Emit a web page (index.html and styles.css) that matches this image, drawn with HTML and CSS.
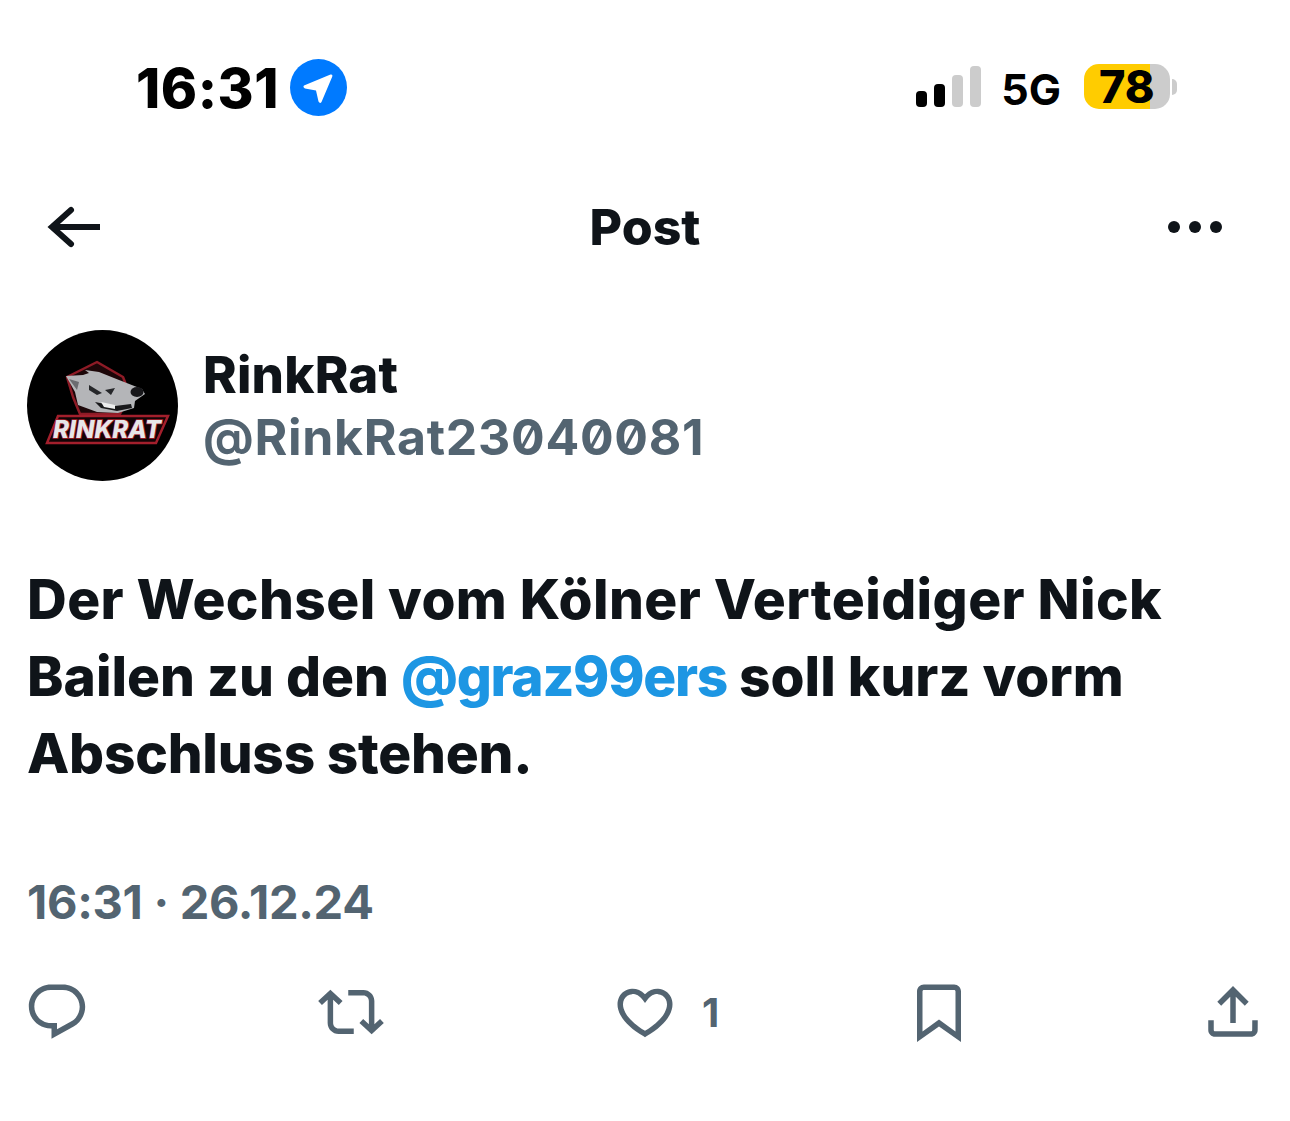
FILE: index.html
```html
<!DOCTYPE html>
<html lang="de">
<head>
  <meta charset="UTF-8">
  <title>Post</title>
  <meta name="viewport" content="width=device-width, initial-scale=1.0">
  <link rel="stylesheet" href="styles.css">
</head>
<body>
  <div id="status-bar">
    <div class="status-left">
      <span class="clock">16:31</span>
      <svg class="location" viewBox="0 0 57 57">
        <circle cx="28.5" cy="28.5" r="28.5" fill="#007aff"/>
        <path d="M14 26.5 L40.5 15.5 Q43 15 42.3 17.5 L31.5 43 Q30 45 28.5 42.5 L26 31.5 L15 29.5 Q12.5 28 14 26.5 Z" fill="#fff"/>
      </svg>
    </div>
    <div class="status-right">
      <div class="signal">
        <span class="bar on b1"></span>
        <span class="bar on b2"></span>
        <span class="bar b3"></span>
        <span class="bar b4"></span>
      </div>
      <span class="network">5G</span>
      <div class="battery">
        <div class="battery-body"><span class="battery-level">78</span></div>
        <span class="battery-nub"></span>
      </div>
    </div>
  </div>

  <div id="nav-bar">
    <svg class="back" viewBox="0 0 60 48">
      <path d="M29 7 L10 24 L29 41" fill="none" stroke="#0f1419" stroke-width="6" stroke-linecap="round"/>
      <path d="M10 24 H58" fill="none" stroke="#0f1419" stroke-width="6"/>
    </svg>
    <h1 class="nav-title">Post</h1>
    <div class="more">
      <span class="dot"></span>
      <span class="dot"></span>
      <span class="dot"></span>
    </div>
  </div>

  <div id="post">
    <div class="author">
      <svg class="avatar" viewBox="0 0 151 151">
        <circle cx="75.5" cy="75.5" r="75.5" fill="#000"/>
        <path d="M70 32 L96 47 L103 65 L93 84 L53 84 L46 67 L40 47 Z" fill="#1c0608" stroke="#8e1b26" stroke-width="2.5" stroke-linejoin="round"/>
        <path d="M39 46 L56 45 L62 43 L58 40 L72 42 L92 50 L115 59 L118 64 L108 71 L107 78 L91 83 L70 82 L51 75 L48 62 Z" fill="#b4b5b8"/>
        <path d="M42 49 L52 52 L50 60 Z" fill="#6b6c70"/>
        <path d="M62 55 L75 63 L70 65 L62 60 Z M78 60 L88 58 L84 65 Z" fill="#26272a"/>
        <path d="M68 72 L88 76 L104 74 L105 78 L90 81 L74 78 Z" fill="#18181a"/>
        <path d="M74 72 L88 75 L88 79 L77 77 Z" fill="#eceded"/>
        <ellipse cx="110" cy="62" rx="6.5" ry="5" fill="#17171a"/>
        <path d="M31 86 L141 86 L129 113 L20 113 Z" fill="#120406" stroke="#a31f2c" stroke-width="2.5"/>
        <text class="logo-text" x="26" y="108" textLength="108" lengthAdjust="spacingAndGlyphs">RINKRAT</text>
      </svg>
      <div class="author-names">
        <span class="display-name">RinkRat</span>
        <span class="handle">@RinkRat23040081</span>
      </div>
    </div>

    <p class="post-text"><span class="line-wide">Der Wechsel vom Kölner Verteidiger Nick</span> Bailen zu den <span class="mention">@graz99ers</span> soll kurz vorm <span class="line-tight">Abschluss stehen.</span></p>

    <div class="post-date">16:31 · 26.12.24</div>

    <div class="actions">
      <div class="action">
        <svg class="icon" viewBox="0 0 24 24"><path d="M1.751 10c0-4.42 3.584-8 8.005-8h4.366c4.49 0 8.129 3.64 8.129 8.13 0 2.96-1.607 5.68-4.196 7.11l-8.054 4.46v-3.69h-.067c-4.49.1-8.183-3.51-8.183-8.01zm8.005-6c-3.317 0-6.005 2.69-6.005 6 0 3.37 2.77 6.08 6.138 6.01l.351-.01h1.761v2.3l5.087-2.81c1.951-1.08 3.163-3.13 3.163-5.36 0-3.39-2.744-6.13-6.129-6.13H9.756z"/></svg>
      </div>
      <div class="action">
        <svg class="icon" viewBox="0 0 24 24"><path d="M4.5 3.88l4.432 4.14-1.364 1.46L5.5 7.55V16c0 1.1.896 2 2 2H13v2H7.5c-2.209 0-4-1.79-4-4V7.55L1.432 9.48.068 8.02 4.5 3.88zM16.5 6H11V4h5.5c2.209 0 4 1.79 4 4v8.45l2.068-1.93 1.364 1.46-4.432 4.14-4.432-4.14 1.364-1.46 2.068 1.93V8c0-1.1-.896-2-2-2z"/></svg>
      </div>
      <div class="action">
        <svg class="icon" viewBox="0 0 24 24"><path d="M16.697 5.5c-1.222-.06-2.679.51-3.89 2.16l-.805 1.09-.806-1.09C9.984 6.01 8.526 5.44 7.304 5.5c-1.243.07-2.349.78-2.91 1.91-.552 1.12-.633 2.78.479 4.82 1.074 1.97 3.257 4.27 7.129 6.61 3.87-2.34 6.052-4.64 7.126-6.61 1.111-2.04 1.03-3.7.477-4.82-.561-1.13-1.666-1.84-2.908-1.91zm4.187 7.69c-1.351 2.48-4.001 5.12-8.379 7.67l-.503.3-.504-.3c-4.379-2.55-7.029-5.19-8.382-7.67-1.36-2.5-1.41-4.86-.514-6.67.887-1.79 2.647-2.91 4.601-3.01 1.651-.09 3.368.56 4.798 2.01 1.429-1.45 3.146-2.1 4.796-2.01 1.954.1 3.714 1.22 4.601 3.01.896 1.81.846 4.17-.514 6.67z"/></svg>
        <span class="count">1</span>
      </div>
      <div class="action">
        <svg class="icon" viewBox="0 0 24 24"><path d="M4 4.5C4 3.12 5.119 2 6.5 2h11C18.881 2 20 3.12 20 4.5v18.44l-8-5.71-8 5.71V4.5zM6.5 4c-.276 0-.5.22-.5.5v14.56l6-4.29 6 4.29V4.5c0-.28-.224-.5-.5-.5h-11z"/></svg>
      </div>
      <div class="action">
        <svg class="icon" viewBox="0 0 24 24"><path d="M12 2.59l5.7 5.7-1.41 1.42L13 6.41V16h-2V6.41l-3.3 3.3-1.41-1.42L12 2.59zM21 15l-.02 3.51c0 1.38-1.12 2.49-2.5 2.49H5.5C4.11 21 3 19.88 3 18.5V15h2v3.5c0 .28.22.5.5.5h12.98c.28 0 .5-.22.5-.5L19 15h2z"/></svg>
      </div>
    </div>
  </div>
</body>
</html>
```

FILE: styles.css
```css
html, body {
  margin: 0;
  padding: 0;
  background: #fff;
  font-family: 'Inter', 'Liberation Sans', sans-serif;
  color: #0f1419;
  overflow: hidden;
}

/* status bar */
#status-bar {
  height: 175px;
  display: flex;
  align-items: center;
  justify-content: space-between;
  padding: 0 113px 0 136px;
}
.status-left {
  display: flex;
  align-items: center;
  gap: 11px;
}
.clock {
  font-size: 55px;
  font-weight: 800;
  letter-spacing: 0.5px;
  color: #000;
  line-height: 1;
  padding-top: 2px;
}
.location {
  width: 57px;
  height: 57px;
}
.status-right {
  display: flex;
  align-items: center;
}
.signal {
  display: flex;
  align-items: flex-end;
  gap: 7px;
  height: 41px;
  margin-bottom: 2px;
}
.bar {
  width: 11px;
  border-radius: 4px;
  background: #ccc;
}
.bar.on { background: #000; }
.b1 { height: 16px; }
.b2 { height: 23px; }
.b3 { height: 32px; }
.b4 { height: 41px; }
.network {
  margin-left: 20px;
  font-size: 43px;
  font-weight: 700;
  color: #000;
  line-height: 1;
  padding-top: 3px;
}
.battery {
  display: flex;
  align-items: center;
  margin-left: 23px;
  margin-bottom: 2px;
  gap: 2px;
}
.battery-body {
  width: 86px;
  height: 45px;
  border-radius: 15px;
  background: linear-gradient(to right, #ffcc00 66px, #ccc 66px);
  display: flex;
  align-items: center;
  padding-left: 15px;
  box-sizing: border-box;
}
.battery-level {
  font-size: 45px;
  font-weight: 800;
  color: #000;
  line-height: 1;
}
.battery-nub {
  width: 5px;
  height: 16px;
  background: #ccc;
  border-radius: 0 8px 8px 0;
}

/* nav */
#nav-bar {
  height: 103px;
  display: grid;
  grid-template-columns: 1fr auto 1fr;
  align-items: center;
  padding: 0 68px;
}
.back {
  width: 60px;
  height: 48px;
  margin-left: -26px;
}
.nav-title {
  margin: 0;
  font-size: 50px;
  font-weight: 800;
  line-height: 1;
}
.more {
  justify-self: end;
  display: flex;
  gap: 9px;
}
.dot {
  width: 12px;
  height: 12px;
  border-radius: 50%;
  background: #0f1419;
}

/* post */
#post {
  padding-top: 52px;
}
.author {
  display: flex;
  align-items: center;
  gap: 25px;
  padding-left: 27px;
}
.avatar {
  width: 151px;
  height: 151px;
  flex: none;
}
.logo-text {
  font-family: 'Inter', sans-serif;
  font-size: 24px;
  font-weight: 800;
  font-style: italic;
  fill: #e6e6e8;
  stroke: #a31f2c;
  stroke-width: 1.6;
  paint-order: stroke;
}
.author-names {
  display: flex;
  flex-direction: column;
}
.display-name {
  font-size: 51px;
  font-weight: 800;
  letter-spacing: 0.2px;
  line-height: 63px;
}
.handle {
  font-size: 50px;
  font-weight: 700;
  font-feature-settings: "zero";
  letter-spacing: 0.7px;
  line-height: 63px;
  color: #536471;
}
.post-text {
  margin: 80px 0 0;
  padding: 0 100px 0 27px;
  font-size: 55px;
  font-weight: 800;
  line-height: 77px;
}
.line-wide { letter-spacing: 0.4px; }
.line-tight { letter-spacing: -0.25px; }
.mention {
  color: #1d96e3;
  letter-spacing: -1.3px;
}
.post-date {
  margin-top: 80px;
  padding-left: 27px;
  font-size: 47px;
  font-weight: 700;
  letter-spacing: -0.3px;
  line-height: 60px;
  color: #536471;
}
.actions {
  display: grid;
  grid-template-columns: repeat(4, 294px) 66px;
  margin-top: 47px;
  padding-left: 24px;
}
.action {
  display: flex;
  align-items: center;
  gap: 24px;
  height: 66px;
}
.icon {
  width: 66px;
  height: 66px;
  fill: #536471;
  flex: none;
}
.count {
  font-size: 40px;
  font-weight: 700;
  color: #536471;
}
```
